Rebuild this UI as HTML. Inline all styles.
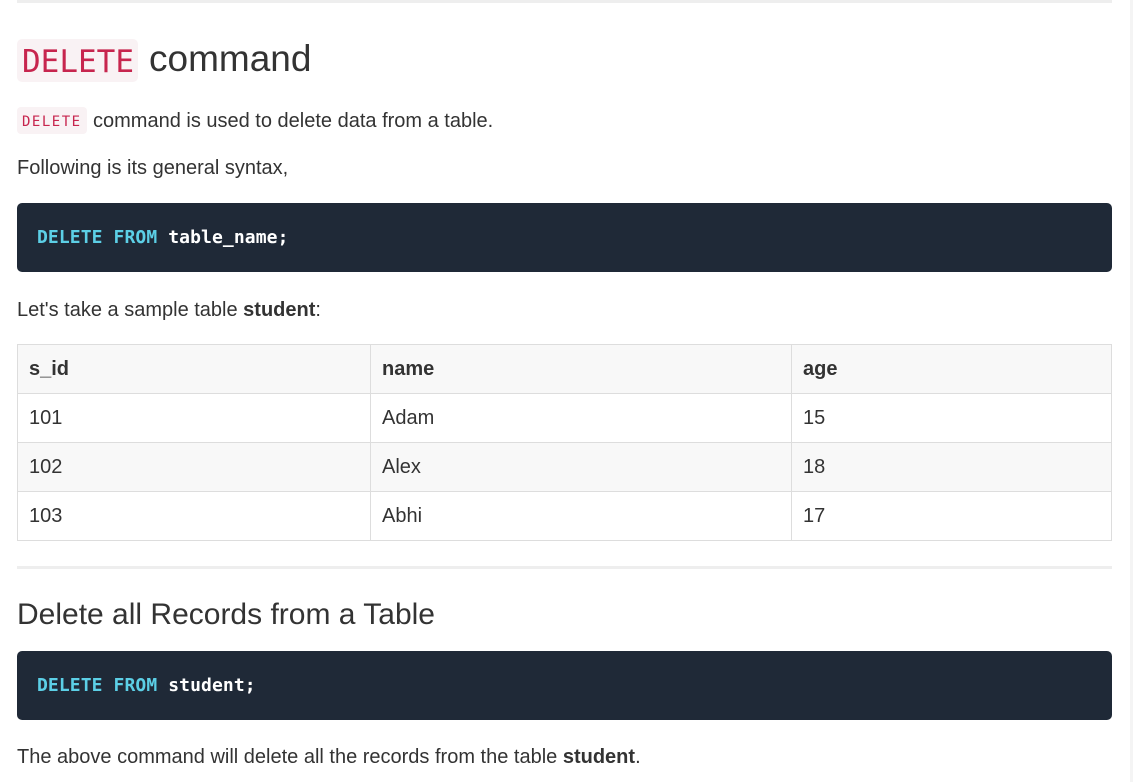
<!DOCTYPE html>
<html><head><style>
body{margin:0;width:1135px;height:782px;overflow:hidden;background:#fff;font-family:"Liberation Sans",Arial,sans-serif;color:#333;position:relative}
.a{position:absolute}
.hr{left:17px;width:1095px;height:3px;background:#eee}
.p{font-size:20px;left:17px;line-height:24px}
code{font-family:"DejaVu Sans Mono","Liberation Mono",monospace}
.pre{left:17px;width:1095px;height:69px;background:#1f2937;border-radius:5px}
.pre code{position:absolute;left:20px;top:23px;font-size:18px;font-weight:bold;color:#fff;line-height:24px;letter-spacing:0.1px}
.k{color:#5ccfe6}
table{border-collapse:collapse;left:17px;top:344px;width:1095px;font-size:20px}
td,th{border:1px solid #ddd;height:47px;padding:1px 0 0 11px;text-align:left;color:#333}
th{font-weight:bold}
tr.s{background:#f8f8f8}
</style></head><body>
<div class="a hr" style="top:0"></div>
<div class="a" style="left:1130px;top:0;width:3px;height:782px;background:#f4f4f4"></div>
<div class="a" style="left:17px;top:39px;height:43px;width:121px;background:#f9f2f4;border-radius:5px"></div>
<div class="a" style="left:22px;top:42px;font-size:31px;line-height:40px;color:#c7254e"><code>DELETE</code></div>
<div class="a" style="left:149px;top:37px;font-size:37px;line-height:44px;color:#333">command</div>
<div class="a" style="left:17px;top:107px;width:70px;height:27px;background:#f9f2f4;border-radius:4px"></div>
<div class="a" style="left:22px;top:110px;font-size:14px;line-height:22px;color:#c7254e;letter-spacing:1.5px"><code>DELETE</code></div>
<div class="a p" style="left:93px;top:109px">command is used to delete data from a table.</div>
<div class="a p" style="top:156px">Following is its general syntax,</div>
<div class="a pre" style="top:203px"><code><span class="k">DELETE FROM</span> table_name;</code></div>
<div class="a p" style="top:298px">Let's take a sample table <b>student</b>:</div>
<table class="a">
<tr class="s"><th style="width:341px">s_id</th><th style="width:409px">name</th><th>age</th></tr>
<tr><td>101</td><td>Adam</td><td>15</td></tr>
<tr class="s"><td>102</td><td>Alex</td><td>18</td></tr>
<tr><td>103</td><td>Abhi</td><td>17</td></tr>
</table>
<div class="a hr" style="top:566px"></div>
<div class="a" style="left:17px;top:597px;font-size:30px;line-height:36px">Delete all Records from a Table</div>
<div class="a pre" style="top:651px"><code><span class="k">DELETE FROM</span> student;</code></div>
<div class="a p" style="top:745px">The above command will delete all the records from the table <b>student</b>.</div>
</body></html>
